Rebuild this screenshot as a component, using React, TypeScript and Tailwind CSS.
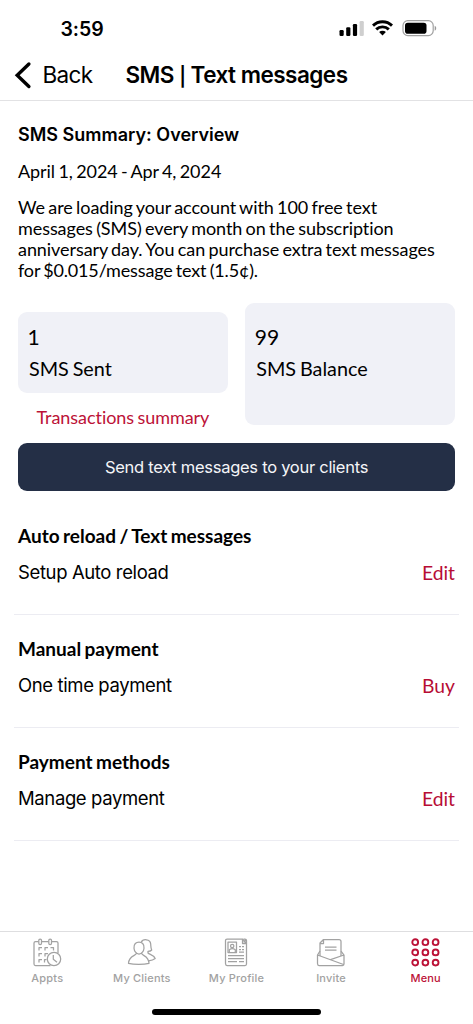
import type { ReactNode } from "react";

const lato = "font-[Lato,sans-serif] [font-variant-ligatures:none]";

function StatusBar() {
  return (
    <div className="flex h-[50px] items-start justify-between pl-[60.5px] pr-[36px] pt-[17px]">
      <span className="text-[19.5px] font-semibold leading-[24px] tracking-[-0.05px]">3:59</span>
      <div className="flex items-center pt-[1px]">
        <svg width="25" height="20" viewBox="0 0 25 20">
          <rect x="0.5" y="12" width="4.2" height="6" rx="1.2" />
          <rect x="7.2" y="9.2" width="4.2" height="8.8" rx="1.2" />
          <rect x="13.9" y="6" width="4.2" height="12" rx="1.2" />
          <rect x="20.6" y="3" width="4.2" height="15" rx="1.2" fill="#cfcfcf" />
        </svg>
        <svg className="ml-[8px]" width="21" height="20" viewBox="0 0 21 20" fill="none" stroke="#000" strokeWidth="2.9">
          <path d="M1 7.6a13.7 13.7 0 0 1 19 0" />
          <path d="M4.2 11.4a9 9 0 0 1 12.6 0" />
          <path d="M7.1 14.1a4.9 4.9 0 0 1 6.8 0L10.5 17.5Z" fill="#000" stroke="none" />
        </svg>
        <svg className="ml-[8px]" width="36" height="20" viewBox="0 0 36 20">
          <rect x="2" y="2.7" width="30.2" height="14.9" rx="4.8" fill="none" stroke="#a0a0a0" strokeWidth="1.2" />
          <rect x="4" y="4.7" width="21.5" height="11" rx="2.8" />
          <path d="M33.7 7.7c2 .8 2 4.2 0 5Z" fill="#999" />
        </svg>
      </div>
    </div>
  );
}

function Header() {
  return (
    <header className="flex h-[51px] items-center border-b border-[#e2e2e4] pl-[14px]">
      <svg width="18" height="28" viewBox="0 0 18 28" fill="none" stroke="#000" strokeWidth="3.4" strokeLinecap="round">
        <path d="M14.9 3 3.2 14.2l11.7 11.3" />
      </svg>
      <span className="ml-[10.5px] w-[83px] text-[22.5px] leading-[28px] tracking-[-0.65px]">Back</span>
      <h1 className="flex items-center whitespace-pre text-[22.5px] font-semibold leading-[28px] tracking-[-0.52px]">
        <span>SMS </span>
        <span className="pt-[3px] text-[19px] leading-[24px]">|</span>
        <span> Text messages</span>
      </h1>
    </header>
  );
}

function Setting({ title, label, action }: { title: string; label: string; action: string }) {
  return (
    <section className="mx-[14px] h-[113px] border-b border-[#ececf2] px-1 pt-[22px]">
      <h2 className={`${lato} text-[19px] font-bold leading-[24px] [word-spacing:-1.2px]`}>{title}</h2>
      <div className="mt-[12px] flex items-center justify-between leading-[24px]">
        <span className="text-[18.5px] tracking-[-0.38px]">{label}</span>
        <a className={`${lato} pt-[1px] text-[19.3px] text-[#b70d35]`}>{action}</a>
      </div>
    </section>
  );
}

function Tab({ label, active = false, children }: { label: string; active?: boolean; children: ReactNode }) {
  return (
    <div className={active ? "flex flex-1 flex-col items-center text-[#bc1237]" : "flex flex-1 flex-col items-center text-[#a2a2a2]"}>
      <svg width="30" height="30" viewBox="0 0 30 30" fill="none" stroke="currentColor" strokeWidth="1.25" strokeLinejoin="round">
        {children}
      </svg>
      <span className="mt-[3px] text-[11px] font-medium leading-[15px] tracking-[0.2px]">{label}</span>
    </div>
  );
}

export default function App() {
  return (
    <div className="flex h-[1024px] w-[473px] flex-col overflow-hidden bg-white font-[Inter,sans-serif] text-black">
      <StatusBar />
      <Header />
      <main className="flex flex-1 flex-col">
        <div className="px-[18px]">
          <h2 className="mt-[22px] text-[18px] font-semibold leading-[24px] tracking-[0px]">SMS Summary: Overview</h2>
          <p className={`${lato} mt-[12px] text-[18px] leading-[24px] tracking-[-0.06px] [word-spacing:-1.2px]`}>April 1, 2024 - Apr 4, 2024</p>
          <p className={`${lato} mt-[14px] whitespace-nowrap text-[18px] leading-[21px] tracking-[-0.07px] [word-spacing:-1.2px]`}>
            We are loading your account with 100 free text<br />
            messages (SMS) every month on the subscription<br />
            anniversary day. You can purchase extra text messages<br />
            <span className="tracking-[-0.16px]">for $0.015/message text (1.5¢).</span>
          </p>
          <div className={`${lato} mt-[22px] grid grid-cols-2 gap-[17.5px]`}>
            <div className="flex flex-col pt-[8.5px]">
              <div className="h-[81.5px] rounded-[9px] bg-[#f0f1f7] pl-[9.5px] pt-[11px]">
                <div className="text-[21px] leading-[28px]">1</div>
                <div className="mt-[4.5px] pl-[1.5px] text-[19.8px] leading-[26px] [word-spacing:-1.2px]">SMS Sent</div>
              </div>
              <a className="mt-[11px] text-center text-[18px] leading-[26px] tracking-[-0.05px] text-[#bc1237] [word-spacing:-1.2px]">Transactions summary</a>
            </div>
            <div className="h-[121.5px] rounded-[9px] bg-[#f0f1f7] pl-[9.5px] pt-[19.5px]">
              <div className="text-[21px] leading-[28px]">99</div>
              <div className="mt-[4.5px] pl-[1.5px] text-[19.8px] leading-[26px] [word-spacing:-1.2px]">SMS Balance</div>
            </div>
          </div>
          <button className="mt-[12.5px] block h-[48.5px] w-full rounded-[9px] bg-[#242f46] text-[16.5px] leading-[24px] tracking-[-0.27px] text-[#f4f5f8]">
            Send text messages to your clients
          </button>
        </div>
        <div className="mt-[10.5px]">
          <Setting title="Auto reload / Text messages" label="Setup Auto reload" action="Edit" />
          <Setting title="Manual payment" label="One time payment" action="Buy" />
          <Setting title="Payment methods" label="Manage payment" action="Edit" />
        </div>
      </main>
      <footer className="flex h-[93px] flex-col border-t border-[#dedee0]">
        <nav className="flex pt-[6px]">
          <Tab label="Appts">
            <path d="M6.5 3.5H3.5Q2 3.5 2 5V26q0 1.5 1.5 1.5h15M9.5 3.5h7M19.5 3.5h5Q26 3.5 26 5V15" />
            <rect x="6.8" y="1" width="2.7" height="5.5" rx="1.3" />
            <rect x="16.8" y="1" width="2.7" height="5.5" rx="1.3" />
            <path d="M7 12.5v-3h3M13 12.5v-3h3M18.5 9.5h3v3M7 18.5v-3h3M13 18.5v-3h3M7 24.5v-3h3M12.5 24.5v-3h2" />
            <circle cx="22" cy="21" r="6.7" />
            <path d="M21.3 17v4.2l3.7 3" />
          </Tab>
          <Tab label="My Clients">
            <path d="M7 10.3c-.4-4.5 2.2-6.3 5-6.3s5.4 1.8 5 6.3c-.2 2.8-2.2 5.7-5 5.7S7.2 13.1 7 10.3ZM9.5 15.3C8.5 18.3 2 17.3 1.5 25.3c5.5 1.5 15 1.5 20.5 0C21.5 17.3 15.5 18.3 14.5 15.3" />
            <path d="M14.3 4.2c1.5-3.5 9-3.5 9.4 1.8.2 2.8.1 4.3 1 6-.8 1-2.500 1.300-3.700 1.300v1.700c1.400 1.500 6 2 7.200 5.500-1.500 1.300-3.500 2-6.700 2.300" />
          </Tab>
          <Tab label="My Profile">
            <path d="M21.5 1H6Q4.5 1 4.5 2.5v23Q4.5 27.5 6 27.5h18q1.5 0 1.5-1.5V5.5Z" />
            <path d="M21.5 1v4.5h4M22.5 1H24q1.5 0 1.5 1.5v3M22.7 4.5 25 1.5" />
            <rect x="7" y="4" width="8.5" height="10.5" />
            <circle cx="11.2" cy="8" r="1.7" />
            <path d="M8.3 14v-2.3q3-2 6 0V14M18 8.5h2M21 8.5h2M18 11.5h2M21 11.5h2M18 14h5M7 17.5h16M7 20.5h16M7 23.5h9M18 23.5h5" />
          </Tab>
          <Tab label="Invite">
            <path d="M4 18V5L7.5 1.5H23Q25 1.5 25 3.5V18M4 5.5H7.5v-4M9 9h11.5M9 12.2h11.5" />
            <path d="M4 13 1.5 17v8.5Q1.5 27.5 3 27.5h23.5q1.5 0 1.5-1.5V17l-3-4M1.5 17l26 9.5M28 17l-13.5 4.7" />
          </Tab>
          <Tab label="Menu" active>
            <g strokeWidth="1.9">
              {[4.2, 14.4, 24.6].map((y) =>
                [4.2, 14.4, 24.6].map((x) => <circle key={`${x}-${y}`} cx={x} cy={y} r="2.9" />),
              )}
            </g>
          </Tab>
        </nav>
        <div className="mx-auto mb-[9.5px] mt-auto h-[5.5px] w-[169px] rounded-full bg-black" />
      </footer>
    </div>
  );
}
